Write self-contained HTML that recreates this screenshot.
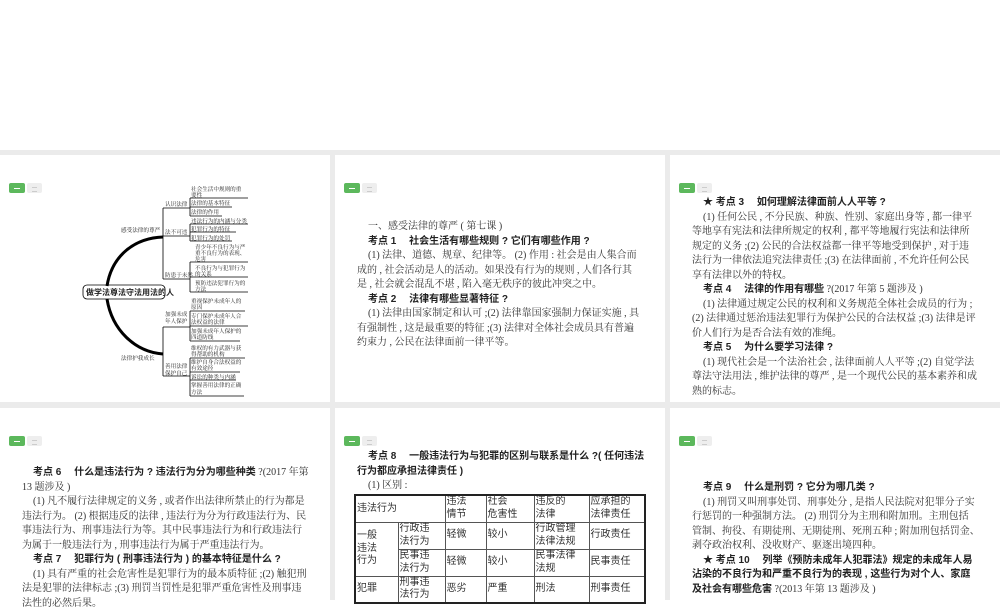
<!DOCTYPE html>
<html><head><meta charset="utf-8">
<style>
*{margin:0;padding:0;box-sizing:border-box}
body{width:1000px;height:600px;overflow:hidden;background:#fff;position:relative;font-family:"Liberation Serif","Noto Serif CJK SC",serif;color:#222}
.bg{position:absolute;left:0;top:150px;width:1000px;height:450px;background:#ebebeb}
.card{position:absolute;background:#fff;overflow:hidden}
.b1{position:absolute;width:16px;height:10px;background:#5cb85c;border-radius:2px}
.b1:after{content:"";position:absolute;left:5px;top:4.5px;width:6px;height:1px;background:#fff}
.b2{position:absolute;width:15px;height:10px;background:#eee;border-radius:2px}
.b2:after{content:"";position:absolute;left:5px;top:3.5px;width:5px;height:3px;border-top:1px solid #ccc;border-bottom:1px solid #ccc}
.t{position:absolute;font-size:10px;line-height:14.5px;white-space:nowrap;color:#333}
.t b{font-family:"Liberation Sans","Noto Sans CJK SC",sans-serif;font-weight:bold;color:#222}
.i{padding-left:11px}
table{position:absolute;border-collapse:collapse;border:2px solid #222;font-size:10px;line-height:12.5px;font-family:"Liberation Sans","Noto Sans CJK SC",sans-serif}
td{border:1px solid #555;vertical-align:middle;padding:0 1px;color:#333}
svg text{font-family:"Noto Serif CJK SC",serif;fill:#222}
</style></head><body>
<div class="bg"></div>

<div class="card" style="left:0;top:155px;width:330px;height:247px"></div>
<div class="card" style="left:335px;top:155px;width:330px;height:247px"></div>
<div class="card" style="left:670px;top:155px;width:330px;height:247px"></div>
<div class="card" style="left:0;top:408px;width:330px;height:192px"></div>
<div class="card" style="left:335px;top:408px;width:330px;height:192px"></div>
<div class="card" style="left:670px;top:408px;width:330px;height:192px"></div>

<div class="b1" style="left:9px;top:183px"></div><div class="b2" style="left:27px;top:183px"></div>
<div class="b1" style="left:344px;top:183px"></div><div class="b2" style="left:362px;top:183px"></div>
<div class="b1" style="left:679px;top:183px"></div><div class="b2" style="left:697px;top:183px"></div>
<div class="b1" style="left:9px;top:436px"></div><div class="b2" style="left:27px;top:436px"></div>
<div class="b1" style="left:344px;top:436px"></div><div class="b2" style="left:362px;top:436px"></div>
<div class="b1" style="left:679px;top:436px"></div><div class="b2" style="left:697px;top:436px"></div>

<svg style="position:absolute;left:0;top:0" width="330" height="402" viewBox="0 0 330 402">
<g fill="none" stroke="#000">
<path d="M107,286 C112,255 135,238 163,237" stroke-width="3"/>
<path d="M107,299 C112,330 135,352 163,354" stroke-width="3"/>
<rect x="83" y="285" width="82" height="14" rx="4" stroke-width="0.8"/>
<g stroke-width="0.8">
<path d="M163,208 V279 M163,208 H190 M163,236 H190 M163,279 H190"/>
<path d="M190,198 V216 M190,224 V241 M190,262 V292"/>
<path d="M190,198 H248 M190,207 H232 M190,216 H222 M190,224 H248 M190,232 H236 M190,241 H232 M190,262 H248 M190,277 H248 M190,292 H248"/>
<path d="M163,327 V376 M163,327 H190 M163,376 H190"/>
<path d="M190,311 V341 M190,358 V396"/>
<path d="M190,311 H245 M190,326 H248 M190,341 H240 M190,358 H245 M190,372 H240 M190,380 H236 M190,396 H244"/>
</g></g>
<g font-size="5.6">
<text x="121" y="232">感受法律的尊严</text>
<text x="121" y="360">法律护我成长</text>
<text x="165" y="206">认识法律</text>
<text x="165" y="234">法不可违</text>
<text x="165" y="277">防患于未然</text>
<text x="165" y="316">加强未成</text><text x="165" y="323">年人保护</text>
<text x="165" y="368">善用法律</text><text x="165" y="375">保护自己</text>
<text x="191" y="191">社会生活中规则的重</text><text x="191" y="197">要性</text>
<text x="191" y="205">法律的基本特征</text>
<text x="191" y="214">法律的作用</text>
<text x="191" y="223">违法行为的内涵与分类</text>
<text x="191" y="231">犯罪行为的特征</text>
<text x="191" y="240">犯罪行为的处罚</text>
<text x="195" y="249">青少年不良行为与严</text><text x="195" y="255">重不良行为的表现、</text><text x="195" y="261">危害</text>
<text x="195" y="270">不良行为与犯罪行为</text><text x="195" y="276">的关系</text>
<text x="195" y="285">预防违法犯罪行为的</text><text x="195" y="291">方法</text>
<text x="191" y="303">重视保护未成年人的</text><text x="191" y="309">原因</text>
<text x="191" y="318">专门保护未成年人合</text><text x="191" y="324">法权益的法律</text>
<text x="191" y="333">加强未成年人保护的</text><text x="191" y="339">四道防线</text>
<text x="191" y="350">维权的有力武器与获</text><text x="191" y="356">得帮助的机构</text>
<text x="191" y="364">维护自身合法权益的</text><text x="191" y="370">有效途径</text>
<text x="191" y="379">诉讼的种类与内涵</text>
<text x="191" y="387">掌握善用法律的正确</text><text x="191" y="394">方法</text>
</g>
<text x="86" y="295" font-size="8" font-weight="bold" style="font-family:'Noto Sans CJK SC',sans-serif">做学法尊法守法用法的人</text>
</svg>

<div class="t" style="left:357px;top:220px">
<div class="i">一、感受法律的尊严 ( 第七课 )</div>
<div class="i"><b>考点 1　 社会生活有哪些规则 ? 它们有哪些作用 ?</b></div>
<div class="i">(1) 法律、道德、规章、纪律等。 (2) 作用 : 社会是由人集合而</div>
<div>成的 , 社会活动是人的活动。如果没有行为的规则 , 人们各行其</div>
<div>是 , 社会就会混乱不堪 , 陷入毫无秩序的彼此冲突之中。</div>
<div class="i"><b>考点 2　 法律有哪些显著特征 ?</b></div>
<div class="i">(1) 法律由国家制定和认可 ;(2) 法律靠国家强制力保证实施 , 具</div>
<div>有强制性 , 这是最重要的特征 ;(3) 法律对全体社会成员具有普遍</div>
<div>约束力 , 公民在法律面前一律平等。</div>
</div>

<div class="t" style="left:692px;top:196px">
<div class="i"><b>★ 考点 3　 如何理解法律面前人人平等 ?</b></div>
<div class="i">(1) 任何公民 , 不分民族、种族、性别、家庭出身等 , 都一律平</div>
<div>等地享有宪法和法律所规定的权利 , 都平等地履行宪法和法律所</div>
<div>规定的义务 ;(2) 公民的合法权益都一律平等地受到保护 , 对于违</div>
<div>法行为一律依法追究法律责任 ;(3) 在法律面前 , 不允许任何公民</div>
<div>享有法律以外的特权。</div>
<div class="i"><b>考点 4　 法律的作用有哪些</b> ?(2017 年第 5 题涉及 )</div>
<div class="i">(1) 法律通过规定公民的权利和义务规范全体社会成员的行为 ;</div>
<div>(2) 法律通过惩治违法犯罪行为保护公民的合法权益 ;(3) 法律是评</div>
<div>价人们行为是否合法有效的准绳。</div>
<div class="i"><b>考点 5　 为什么要学习法律 ?</b></div>
<div class="i">(1) 现代社会是一个法治社会 , 法律面前人人平等 ;(2) 自觉学法</div>
<div>尊法守法用法 , 维护法律的尊严 , 是一个现代公民的基本素养和成</div>
<div>熟的标志。</div>
</div>

<div class="t" style="left:22px;top:466px">
<div class="i"><b>考点 6　 什么是违法行为 ? 违法行为分为哪些种类</b> ?(2017 年第</div>
<div>13 题涉及 )</div>
<div class="i">(1) 凡不履行法律规定的义务 , 或者作出法律所禁止的行为都是</div>
<div>违法行为。 (2) 根据违反的法律 , 违法行为分为行政违法行为、民</div>
<div>事违法行为、刑事违法行为等。其中民事违法行为和行政违法行</div>
<div>为属于一般违法行为 , 刑事违法行为属于严重违法行为。</div>
<div class="i"><b>考点 7　 犯罪行为 ( 刑事违法行为 ) 的基本特征是什么 ?</b></div>
<div class="i">(1) 具有严重的社会危害性是犯罪行为的最本质特征 ;(2) 触犯刑</div>
<div>法是犯罪的法律标志 ;(3) 刑罚当罚性是犯罪严重危害性及刑事违</div>
<div>法性的必然后果。</div>
</div>

<div class="t" style="left:357px;top:450px">
<div class="i"><b>考点 8　 一般违法行为与犯罪的区别与联系是什么 ?( 任何违法</b></div>
<div><b>行为都应承担法律责任 )</b></div>
<div class="i">(1) 区别 :</div>
</div>
<table style="left:354px;top:494px;width:292px">
<tr style="height:27px"><td colspan="2">违法行为</td><td style="width:41px">违法<br>情节</td><td style="width:48px">社会<br>危害性</td><td style="width:55px">违反的<br>法律</td><td>应承担的<br>法律责任</td></tr>
<tr style="height:27px"><td rowspan="2" style="width:43px">一般<br>违法<br>行为</td><td style="width:47px">行政违<br>法行为</td><td>轻微</td><td>较小</td><td>行政管理<br>法律法规</td><td>行政责任</td></tr>
<tr style="height:27px"><td>民事违<br>法行为</td><td>轻微</td><td>较小</td><td>民事法律<br>法规</td><td>民事责任</td></tr>
<tr style="height:27px"><td>犯罪</td><td>刑事违<br>法行为</td><td>恶劣</td><td>严重</td><td>刑法</td><td>刑事责任</td></tr>
</table>

<div class="t" style="left:692px;top:481px">
<div class="i"><b>考点 9　 什么是刑罚 ? 它分为哪几类 ?</b></div>
<div class="i">(1) 刑罚又叫刑事处罚、刑事处分 , 是指人民法院对犯罪分子实</div>
<div>行惩罚的一种强制方法。 (2) 刑罚分为主刑和附加刑。主刑包括</div>
<div>管制、拘役、有期徒刑、无期徒刑、死刑五种 ; 附加刑包括罚金、</div>
<div>剥夺政治权利、没收财产、驱逐出境四种。</div>
<div class="i"><b>★ 考点 10　 列举《预防未成年人犯罪法》规定的未成年人易</b></div>
<div><b>沾染的不良行为和严重不良行为的表现 , 这些行为对个人、家庭</b></div>
<div><b>及社会有哪些危害</b> ?(2013 年第 13 题涉及 )</div>
</div>
</body></html>
